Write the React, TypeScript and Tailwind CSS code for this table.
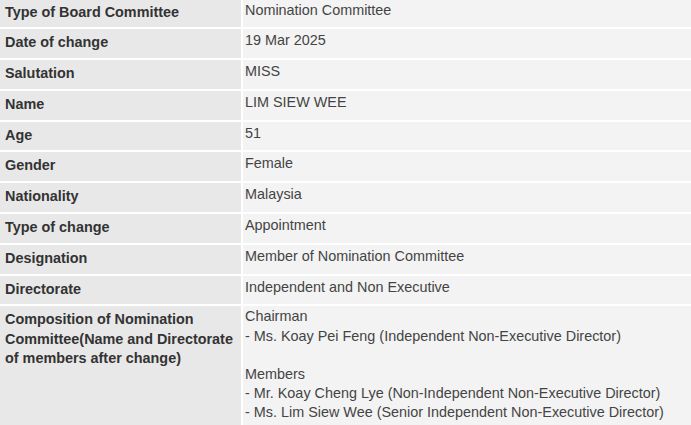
import React from "react";

const rows: [string, string][] = [
  ["Type of Board Committee", "Nomination Committee"],
  ["Date of change", "19 Mar 2025"],
  ["Salutation", "MISS"],
  ["Name", "LIM SIEW WEE"],
  ["Age", "51"],
  ["Gender", "Female"],
  ["Nationality", "Malaysia"],
  ["Type of change", "Appointment"],
  ["Designation", "Member of Nomination Committee"],
  ["Directorate", "Independent and Non Executive"],
];

export default function App() {
  return (
    <div className="w-[691px] h-[425px] overflow-hidden bg-white" style={{ fontFamily: '"Liberation Sans", Arial, sans-serif' }}>
      <div className="-mt-[1.5px] grid grid-cols-[241px_1fr] gap-[2px] text-[14.4px] leading-[19.2px]">
        {rows.map(([k, v]) => (
          <React.Fragment key={k}>
            <div className="bg-[#e8e8e8] min-h-[28.8px] pl-[5px] pt-[4px] font-bold text-[#333333]">{k}</div>
            <div className="bg-[#f3f3f3] min-h-[28.8px] pl-[2px] pt-[2px] text-[#444444]">{v}</div>
          </React.Fragment>
        ))}
        <div className="bg-[#e8e8e8] pl-[5px] pt-[4px] pb-[10px] pr-[2px] font-bold text-[#333333]">
          Composition of Nomination Committee(Name and Directorate of members after change)
        </div>
        <div className="bg-[#f3f3f3] pl-[2px] pt-[1px] pb-[10px] text-[#444444]">
          <div>Chairman</div>
          <div>- Ms. Koay Pei Feng (Independent Non-Executive Director)</div>
          <div>&nbsp;</div>
          <div>Members</div>
          <div>- Mr. Koay Cheng Lye (Non-Independent Non-Executive Director)</div>
          <div>- Ms. Lim Siew Wee (Senior Independent Non-Executive Director)</div>
        </div>
      </div>
    </div>
  );
}
